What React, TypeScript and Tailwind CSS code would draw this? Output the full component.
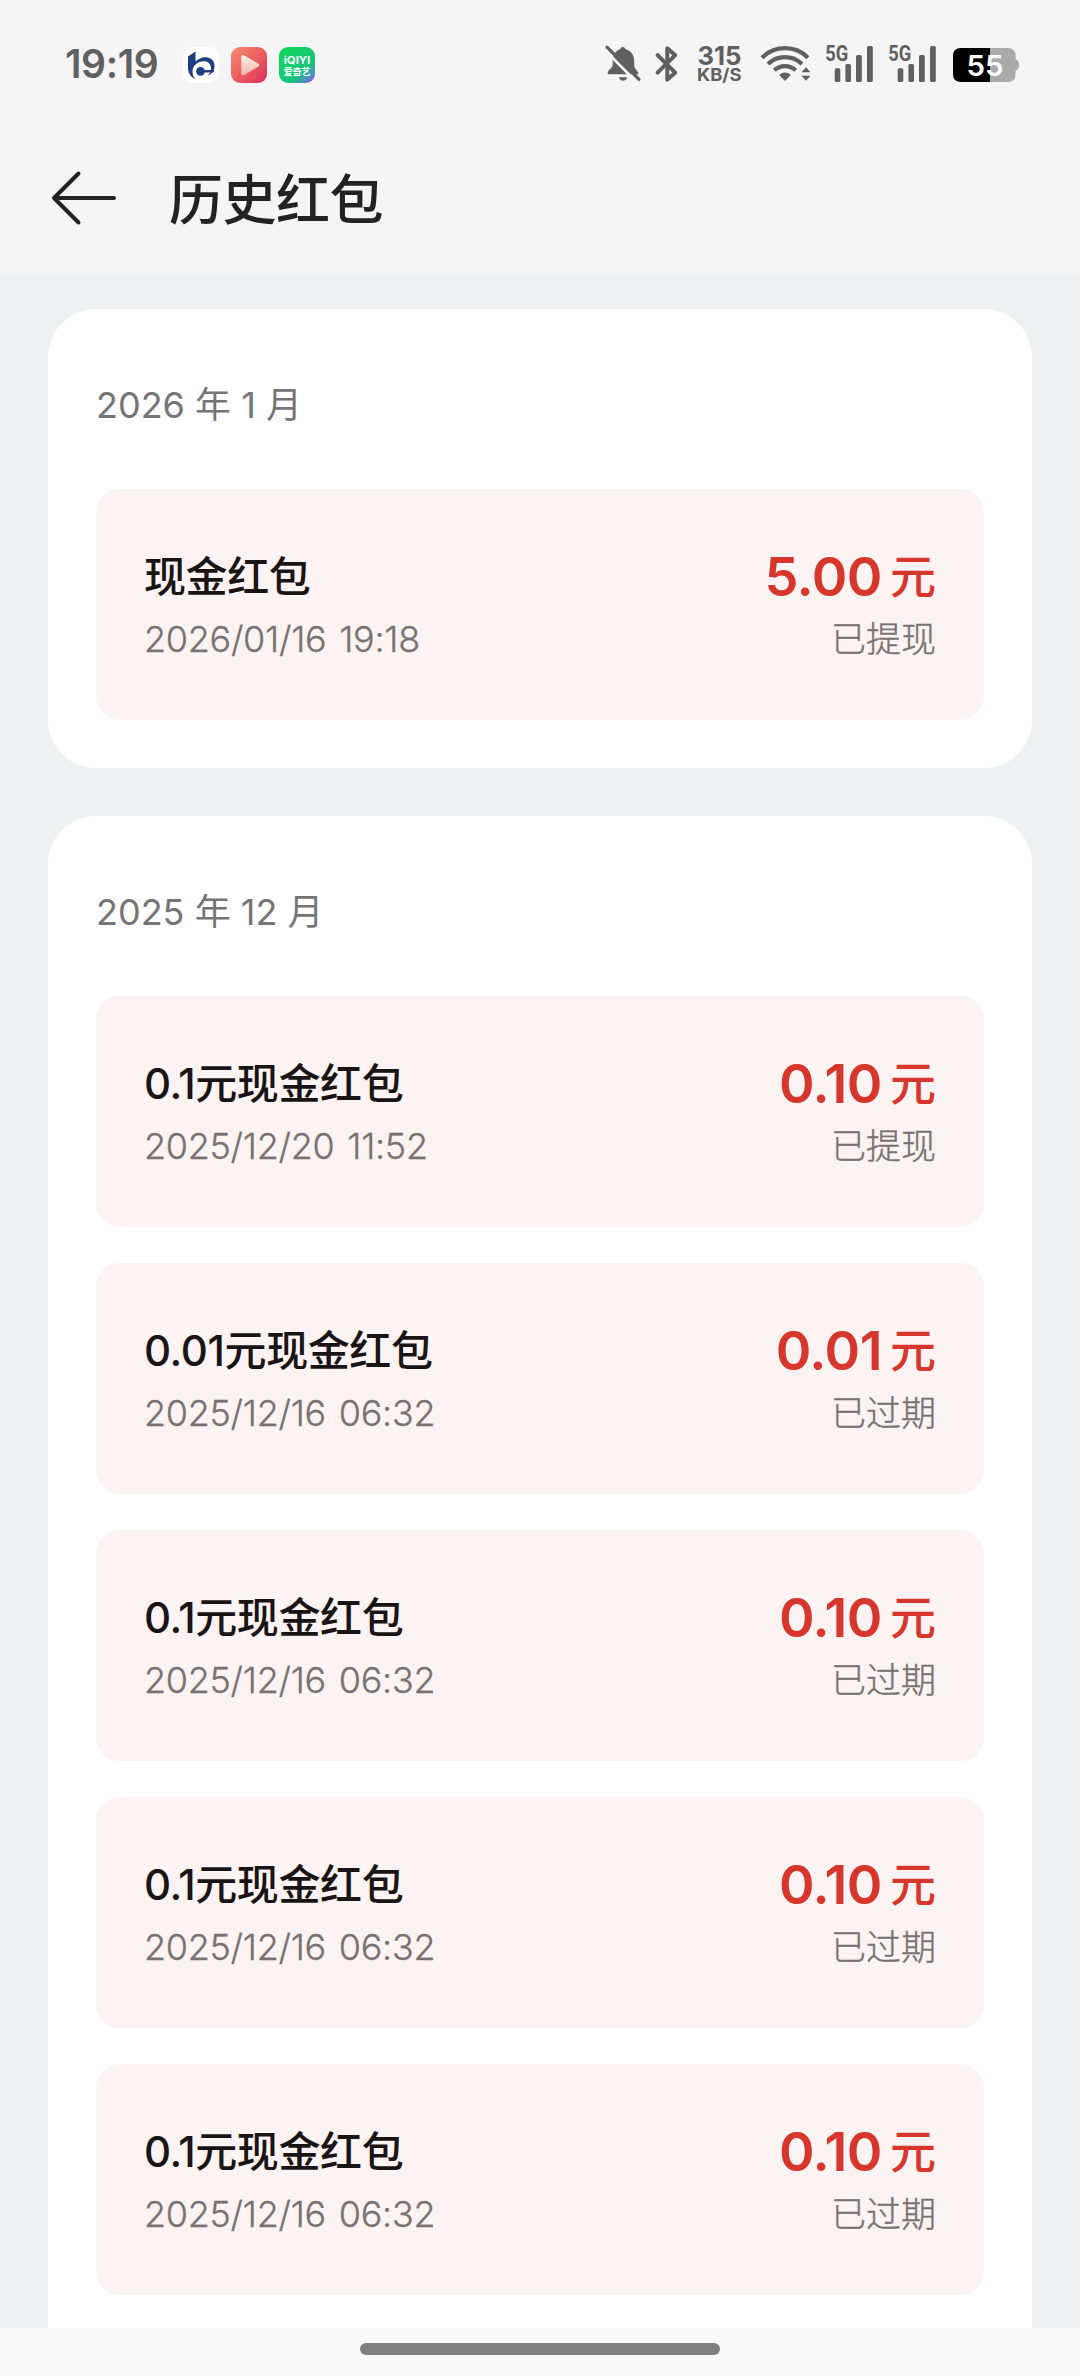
type Packet = { title: string; time: string; amount: string; status: string };
type Group = { year: string; month: string; packets: Packet[] };

const groups: Group[] = [
  {
    year: "2026",
    month: "1",
    packets: [{ title: "现金红包", time: "2026/01/16 19:18", amount: "5.00", status: "已提现" }],
  },
  {
    year: "2025",
    month: "12",
    packets: [
      { title: "0.1元现金红包", time: "2025/12/20 11:52", amount: "0.10", status: "已提现" },
      { title: "0.01元现金红包", time: "2025/12/16 06:32", amount: "0.01", status: "已过期" },
      { title: "0.1元现金红包", time: "2025/12/16 06:32", amount: "0.10", status: "已过期" },
      { title: "0.1元现金红包", time: "2025/12/16 06:32", amount: "0.10", status: "已过期" },
      { title: "0.1元现金红包", time: "2025/12/16 06:32", amount: "0.10", status: "已过期" },
    ],
  },
];

function BankIcon() {
  return (
    <svg width="36" height="36" viewBox="0 0 36 36" className="ml-[26px]">
      <rect width="36" height="36" rx="9" fill="#fff" />
      <path d="M5 9.500 L12.500 4.500 V14.500 C15.500 11.500 19.500 9.800 23.500 10.300 C29 11 32 15 31.500 20 C31 24.500 28 27.500 24.500 28.500 C27 26.500 28 24 28 21.500 C28 17 25 14.300 21 14.300 C14.500 14.300 9.500 19 9.500 24.500 C9.500 27.500 10.500 30 12.500 32 C7.500 30 5 26 5 20.500 Z" fill="#1b3f80" />
      <circle cx="17.500" cy="24.300" r="4.400" fill="#1b3f80" />
      <path d="M18 23 h13.300 l-.8 2.600 h-12.500 z" fill="#1b3f80" />
    </svg>
  );
}

function PlayIcon() {
  return (
    <svg width="36" height="36" viewBox="0 0 36 36" className="ml-3">
      <defs>
        <linearGradient id="playBg" x1="0" y1="0" x2="1" y2="1">
          <stop offset="0" stopColor="#f88f73" />
          <stop offset="0.55" stopColor="#ea5a5c" />
          <stop offset="1" stopColor="#d72c5c" />
        </linearGradient>
        <linearGradient id="playFg" x1="0" y1="0" x2="0" y2="1">
          <stop offset="0" stopColor="#fff0e8" />
          <stop offset="1" stopColor="#f8b5ab" />
        </linearGradient>
      </defs>
      <rect width="36" height="36" rx="9" fill="url(#playBg)" />
      <path d="M12.500 9 L27 17.200 Q28.300 18 27 18.900 L12.500 27.500 Q11 28 11 26.500 V10 Q11 8.300 12.500 9 Z" fill="url(#playFg)" stroke="url(#playFg)" strokeWidth="1.500" strokeLinejoin="round" />
    </svg>
  );
}

function IqiyiIcon() {
  return (
    <svg width="36" height="36" viewBox="0 0 36 36" className="ml-3">
      <defs>
        <linearGradient id="iqBg" x1="0.1" y1="0" x2="1" y2="1">
          <stop offset="0" stopColor="#10d858" />
          <stop offset="0.65" stopColor="#18c47c" />
          <stop offset="0.82" stopColor="#4a90c0" />
          <stop offset="1" stopColor="#9a4af0" />
        </linearGradient>
      </defs>
      <rect width="36" height="36" rx="9" fill="url(#iqBg)" />
      <text x="4.800" y="17" fontSize="10" fontWeight="700" fill="#fff" textLength="26.500" lengthAdjust="spacingAndGlyphs" fontFamily="Inter, sans-serif">iQIYI</text>
      <text x="4.800" y="27.600" fontSize="9.500" fontWeight="700" fill="#fff" textLength="26.500" lengthAdjust="spacingAndGlyphs" fontFamily="'Noto Sans CJK SC', sans-serif">爱奇艺</text>
    </svg>
  );
}

function MutedBellIcon() {
  return (
    <svg width="40" height="40" viewBox="0 0 40 40">
      <path d="M19.700 3 C21 3 22 3.800 22.200 5 C27.500 6.500 31 10.500 31.200 16.500 V22 C32 25 35.500 27.500 35.500 30.300 H5 C4 28 5.500 26.800 7 25.300 C9 23.500 9.700 22 9.700 19.500 V16 C9.700 10.500 13 6.400 17.300 5 C17.500 3.800 18.400 3 19.700 3 Z" fill="#606060" />
      <path d="M15.700 33.300 H24.300 C23.500 35.500 22 36.700 20 36.700 C18 36.700 16.500 35.500 15.700 33.300 Z" fill="#606060" />
      <path d="M1.800 6 L32 36.500" stroke="#f5f5f5" strokeWidth="2.600" />
      <path d="M4 3.200 L36 35.400" stroke="#606060" strokeWidth="3.200" strokeLinecap="round" />
    </svg>
  );
}

function BluetoothIcon() {
  return (
    <svg width="28" height="40" viewBox="0 0 28 40" className="ml-[10px]">
      <path d="M4.600 11.200 L22.200 28.700 L14.300 35.600 V4.200 L22.200 11.200 L4.600 28.700" fill="none" stroke="#606060" strokeWidth="4" strokeLinejoin="round" strokeLinecap="round" />
    </svg>
  );
}

function WifiIcon() {
  return (
    <svg width="54" height="40" viewBox="0 0 54 40" className="ml-4">
      <g fill="none" stroke="#606060" strokeWidth="4.200" strokeLinecap="butt">
        <path d="M3 13.800 C15.500 1 36.500 1 49 13.800" />
        <path d="M9 20 C18.500 10.800 33.500 10.800 43 20" />
        <path d="M15.300 26.300 C21.300 20.600 30.700 20.600 36.700 26.300" />
      </g>
      <path d="M20.200 31 C23.500 27.700 28.500 27.700 31.800 31 L26 37 Z" fill="#606060" />
      <path d="M42.500 28.200 L47 23.200 L51.500 28.200 Z M42.500 31.800 L47 36.800 L51.500 31.800 Z" fill="#606060" />
    </svg>
  );
}

function SignalIcon({ className }: { className: string }) {
  return (
    <svg width="50" height="40" viewBox="0 0 50 40" overflow="visible" className={className}>
      <text x="1.300" y="17" fontSize="21.500" fontWeight="700" fill="#606060" textLength="23" lengthAdjust="spacingAndGlyphs" fontFamily="Roboto, sans-serif">5G</text>
      <g fill="#606060">
        <rect x="10.700" y="24.300" width="5.600" height="13.700" rx="1.500" />
        <rect x="21.400" y="20" width="5.600" height="18" rx="1.500" />
        <rect x="32" y="11" width="5.800" height="27" rx="1.500" />
        <rect x="43" y="2" width="5.800" height="36" rx="1.500" />
      </g>
    </svg>
  );
}

function BatteryIcon() {
  return (
    <svg width="67" height="40" viewBox="0 0 67 40" className="ml-[16px]">
      <path d="M37 4 H54.500 Q62.600 4 62.600 12 V15.500 Q66 16 66 21 Q66 26 62.600 26.500 V30 Q62.600 38 54.500 38 H37 Z" fill="#aaaaaa" />
      <path d="M37 4 H8 Q0 4 0 12 V30 Q0 38 8 38 H37 Z" fill="#000" />
      <text x="13.500" y="32" fontSize="29" fontWeight="600" fill="#fff" textLength="37" lengthAdjust="spacingAndGlyphs" fontFamily="Inter, sans-serif">55</text>
    </svg>
  );
}

function StatusBar() {
  return (
    <div className="flex h-[129px] items-start pt-[44px] text-[#606060]">
      <div className="ml-[65px] w-[92px] text-[39px] leading-[40px] font-semibold tracking-[-0.4px] whitespace-nowrap">19:19</div>
      <div className="flex pt-[3px]">
        <BankIcon />
        <PlayIcon />
        <IqiyiIcon />
      </div>
      <div className="ml-[288px] flex">
        <MutedBellIcon />
        <BluetoothIcon />
        <svg width="46" height="40" viewBox="0 0 46 40" overflow="visible" className="ml-4" fill="#606060" fontFamily="Inter, sans-serif">
          <text x="0.500" y="21" fontSize="26" fontWeight="700" textLength="44" lengthAdjust="spacingAndGlyphs">315</text>
          <text x="0" y="37" fontSize="17.500" fontWeight="700" textLength="44.500" lengthAdjust="spacingAndGlyphs">KB/S</text>
        </svg>
        <WifiIcon />
        <SignalIcon className="ml-[11px]" />
        <SignalIcon className="ml-[13px]" />
        <BatteryIcon />
      </div>
    </div>
  );
}

function PacketRow({ packet }: { packet: Packet }) {
  return (
    <li className="flex h-[231px] justify-between rounded-3xl bg-[#fdf3f2] px-12 pt-[57px]">
      <div>
        <div className="h-[62px] text-[42px] leading-[62px] font-medium tracking-[-0.4px] text-[#1a1414]">{packet.title}</div>
        <div className="h-[60px] text-[36px] leading-[62px] font-light tracking-[-0.3px] text-[#7a7171] [word-spacing:3px] [-webkit-text-stroke:0.3px_#7a7171]">
          {packet.time}
        </div>
      </div>
      <div className="text-right">
        <div className="flex h-[62px] justify-end text-[#d6362c]">
          <span className="text-[54px] leading-[62px] font-semibold tracking-[-0.5px]">{packet.amount}</span>
          <span className="ml-2 text-[46px] leading-[60px] font-medium">元</span>
        </div>
        <div className="h-[60px] text-[35px] leading-[62px] font-light text-[#7a7171] [-webkit-text-stroke:0.4px_#7a7171]">
          {packet.status}
        </div>
      </div>
    </li>
  );
}

export default function App() {
  return (
    <div
      lang="zh-CN"
      className="flex h-[2376px] w-[1080px] flex-col overflow-hidden bg-[#eff0f2] font-['Inter','Noto_Sans_CJK_SC',sans-serif]"
    >
      <header className="h-[273px] shrink-0 bg-[#f5f5f5]">
        <StatusBar />
        <div className="flex h-[138px] items-center pl-[50px]">
          <svg width="68" height="56" viewBox="0 0 68 56" fill="none" stroke="#222" strokeWidth="4" strokeLinecap="round" strokeLinejoin="round">
            <path d="M28.500 3.500 L4 28 L28.500 52.500 M4 28 H64" />
          </svg>
          <h1 className="ml-[51px] pt-[5px] text-[54px] leading-none font-medium tracking-[-0.5px] text-[#222]">历史红包</h1>
        </div>
      </header>
      <main className="flex min-h-0 flex-1 flex-col gap-12 overflow-hidden px-12 pt-9">
        {groups.map((g) => (
          <section key={g.year} className="shrink-0 rounded-[48px] bg-white px-12 pb-12 last:pb-24">
            <h2 className="h-[180px] pt-[66px] text-[36px] leading-[60px] font-normal text-[#757575]">
              {g.year} 年 {g.month} 月
            </h2>
            <ul className="flex flex-col gap-9">
              {g.packets.map((p, i) => (
                <PacketRow key={i} packet={p} />
              ))}
            </ul>
          </section>
        ))}
      </main>
      <footer className="flex h-12 shrink-0 justify-center bg-[#fafafa] pt-[15px]">
        <div className="h-3 w-[360px] rounded-full bg-[#7f7f7f]" />
      </footer>
    </div>
  );
}
